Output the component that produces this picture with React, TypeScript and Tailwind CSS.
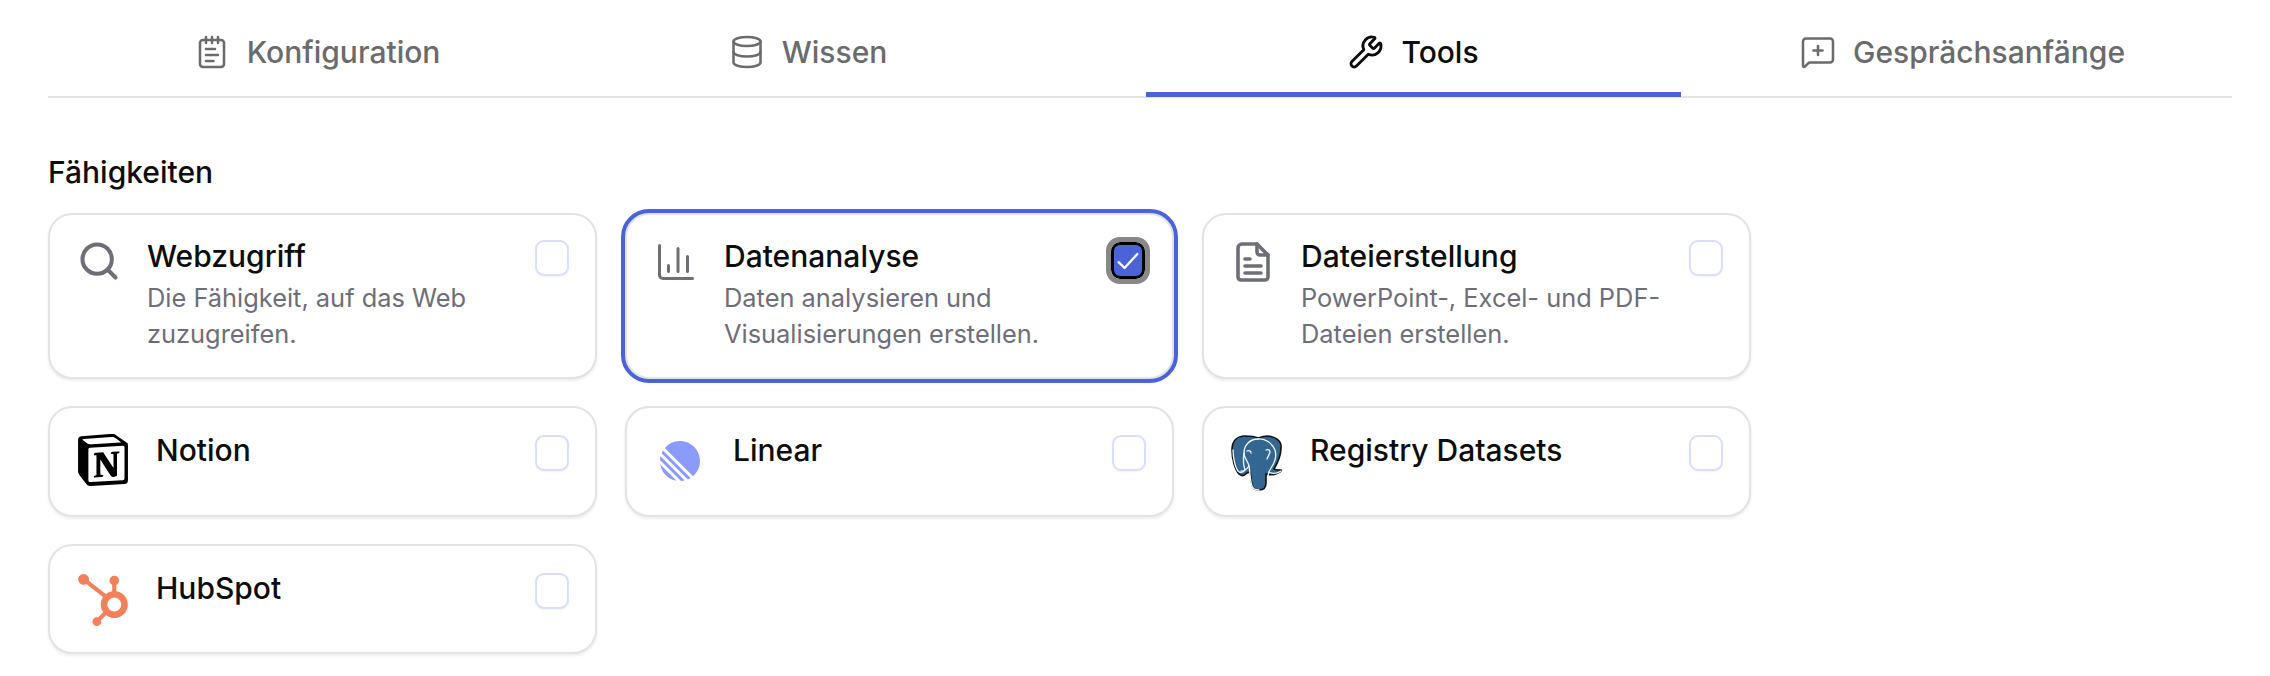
import React from 'react';
import { NotepadText, Database, Wrench, MessageSquarePlus, Search } from 'lucide-react';
import { SiNotion, SiLinear, SiHubspot } from 'react-icons/si';

const tabs = [
  { label: 'Konfiguration', width: 'w-[538px]', icon: <NotepadText className="w-[36px] h-[36px]" strokeWidth={1.7} /> },
  { label: 'Wissen', width: 'w-[444px]', icon: <Database className="w-[36px] h-[36px]" strokeWidth={1.7} /> },
  { label: 'Tools', width: 'w-[535px] ml-[116px]', icon: <Wrench className="w-[36px] h-[36px]" strokeWidth={1.9} />, active: true },
  { label: 'Gesprächsanfänge', width: 'flex-1 pl-[12px]', icon: <MessageSquarePlus className="w-[36px] h-[36px]" strokeWidth={1.7} /> },
];

const ChartIcon = () => (
  <svg viewBox="0 0 36 36" className="w-[36px] h-[36px]" fill="none" stroke="#6e6e78" strokeWidth="3" strokeLinecap="round">
    <path d="M1.5 1.5V31a3.5 3.5 0 0 0 3.5 3.5h29.5" />
    <path d="M10.5 21.5v6M20 4.5v23M29.5 12.5v15" />
  </svg>
);

const FileIcon = () => (
  <svg viewBox="0 0 34 40" className="w-[34px] h-[40px]" fill="none" stroke="#6e6e78" strokeWidth="3.6" strokeLinecap="round" strokeLinejoin="round">
    <path d="M6 2h15l11 11v22a3 3 0 0 1-3 3H5a3 3 0 0 1-3-3V6a4 4 0 0 1 4-4z" />
    <path d="M21 2v8a3 3 0 0 0 3 3h8" />
    <path d="M9 17h5M9 24h16M9 31h16" />
  </svg>
);

// rough redraw of the postgres elephant
const ElephantIcon = () => (
  <svg viewBox="0 0 52 56" className="w-[52px] h-[56px]">
    <path
      d="M14 1C6 1 1 6 1 15c0 9 3 20 7 24 2 2 5 2 8-1l3-1c1 3 1 9 2 13 1 4 4 5 7 5 4 0 7-2 7-7v-9c3 1 8 1 12-1 3-1 4-3 3-3-3 0-6 0-7-1 3-5 7-13 7-21C51 6 44 1 36 1c-3 0-6 1-9 2-4-2-9-2-13-2z"
      fill="#336791"
      stroke="#111"
      strokeWidth="1.6"
    />
    <g fill="none" stroke="#f2f6fa" strokeWidth="1.3" strokeLinecap="round" strokeLinejoin="round">
      <path d="M27 4c-8 0-14 6-14 14 0 6 4 8 5 13 1 5 1 15 3 20 1 3 4 4 7 4" />
      <path d="M27 4c7-1 14 4 17 11 2 6 0 12-4 18-2 3-3 5-3 8v8" />
      <path d="M13 18c-1 6 0 14 1 17-2 3-5 3-7 1-3-4-5-14-5-21" />
      <path d="M18 31c-2 3-6 6-8 5M38 37c3 2 8 2 12-1" />
      <path d="M16 16c2-1 4 0 4 2M35 15c2-1 4 0 4 2-1 3-2 5-3 7" />
    </g>
  </svg>
);

const Check = ({ checked, top }: { checked?: boolean; top: string }) =>
  checked ? (
    <div className="ml-auto mt-[27px] mr-[27px] w-[34px] h-[37px] shrink-0 rounded-[9px] bg-[#4a63d9] border-[3px] border-black outline-[5px] outline-[#888888] flex items-center justify-center">
      <svg viewBox="0 0 24 24" className="w-[28px] h-[28px]" fill="none" stroke="#ffffff" strokeWidth="2" strokeLinecap="round" strokeLinejoin="round">
        <path d="M4 13l5 5L20 6" />
      </svg>
    </div>
  ) : (
    <div className={`ml-auto ${top} mr-[26px] w-[34px] h-[36px] shrink-0 rounded-[9px] bg-white border-2 border-[#d9dffa] shadow-[0_1px_2px_rgba(0,0,0,0.05)]`} />
  );

const Card = ({
  title,
  desc,
  icon,
  slot,
  iconTop,
  checked,
  height,
}: {
  title: string;
  desc?: string[];
  icon: React.ReactNode;
  slot: string;
  iconTop: string;
  checked?: boolean;
  height: string;
}) => (
  <div
    className={`flex items-start bg-white rounded-[24px] border-2 border-[#e3e3e3] shadow-[0_2px_3px_rgba(0,0,0,0.07)] ${height} ${
      checked ? 'outline-[4.5px] outline-[#4a63d9]' : ''
    }`}
  >
    <div className={`${slot} ${iconTop} shrink-0 flex justify-center`}>{icon}</div>
    <div className={desc ? 'mt-[23px]' : 'mt-[24px]'}>
      <div className="text-[30px] leading-[36px] font-[450] text-[#0d0d0d]">{title}</div>
      {desc && (
        <div className="mt-[6px] text-[25.4px] leading-[36px] text-[#6e6e78]">
          {desc.map((line) => (
            <div key={line}>{line}</div>
          ))}
        </div>
      )}
    </div>
    <Check checked={checked} top={desc ? 'mt-[25px]' : 'mt-[27px]'} />
  </div>
);

export default function App() {
  return (
    <div className="w-[2270px] h-[676px] bg-white overflow-hidden pl-[48px] font-['Inter',sans-serif]">
      <div className="flex w-[2184px] h-[98px] border-b-2 border-[#e3e3e3]">
        {tabs.map((tab) => (
          <div
            key={tab.label}
            className={`${tab.width} h-[97px] pt-[12px] border-b-[5px] flex items-center justify-center gap-[17px] text-[30px] font-[450] ${
              tab.active ? 'border-[#4a63d9] text-[#0d0d0d]' : 'border-transparent text-[#6b6b6b]'
            }`}
          >
            {tab.icon}
            <span>{tab.label}</span>
          </div>
        ))}
      </div>

      <h2 className="mt-[56px] mb-[23px] text-[30px] leading-[36px] font-[450] text-[#0d0d0d]">Fähigkeiten</h2>

      <div className="w-[1703px] grid grid-cols-3 gap-x-[28px] gap-y-[27px] items-start">
        <Card
          title="Webzugriff"
          desc={['Die Fähigkeit, auf das Web', 'zuzugreifen.']}
          icon={<Search className="w-[44px] h-[44px] text-[#6e6e78]" strokeWidth={2.2} />}
          slot="w-[97px]"
          iconTop="mt-[24px]"
          height="h-[166px]"
        />
        <Card
          title="Datenanalyse"
          desc={['Daten analysieren und', 'Visualisierungen erstellen.']}
          icon={<ChartIcon />}
          slot="w-[97px]"
          iconTop="mt-[29px]"
          height="h-[166px]"
          checked
        />
        <Card
          title="Dateierstellung"
          desc={['PowerPoint-, Excel- und PDF-', 'Dateien erstellen.']}
          icon={<FileIcon />}
          slot="w-[97px]"
          iconTop="mt-[27px]"
          height="h-[166px]"
        />
        <Card
          title="Notion"
          icon={<SiNotion className="w-[52px] h-[52px] text-black" />}
          slot="w-[106px]"
          iconTop="mt-[26px]"
          height="h-[111px]"
        />
        <Card
          title="Linear"
          icon={<SiLinear className="w-[40px] h-[40px] text-[#8a9bfa]" />}
          slot="w-[106px]"
          iconTop="mt-[33px]"
          height="h-[111px]"
        />
        <Card
          title="Registry Datasets"
          icon={<ElephantIcon />}
          slot="w-[106px]"
          iconTop="mt-[27px]"
          height="h-[111px]"
        />
        <Card
          title="HubSpot"
          icon={<SiHubspot className="w-[52px] h-[54px] text-[#f2805b]" />}
          slot="w-[106px]"
          iconTop="mt-[27px]"
          height="h-[110px]"
        />
      </div>
    </div>
  );
}
